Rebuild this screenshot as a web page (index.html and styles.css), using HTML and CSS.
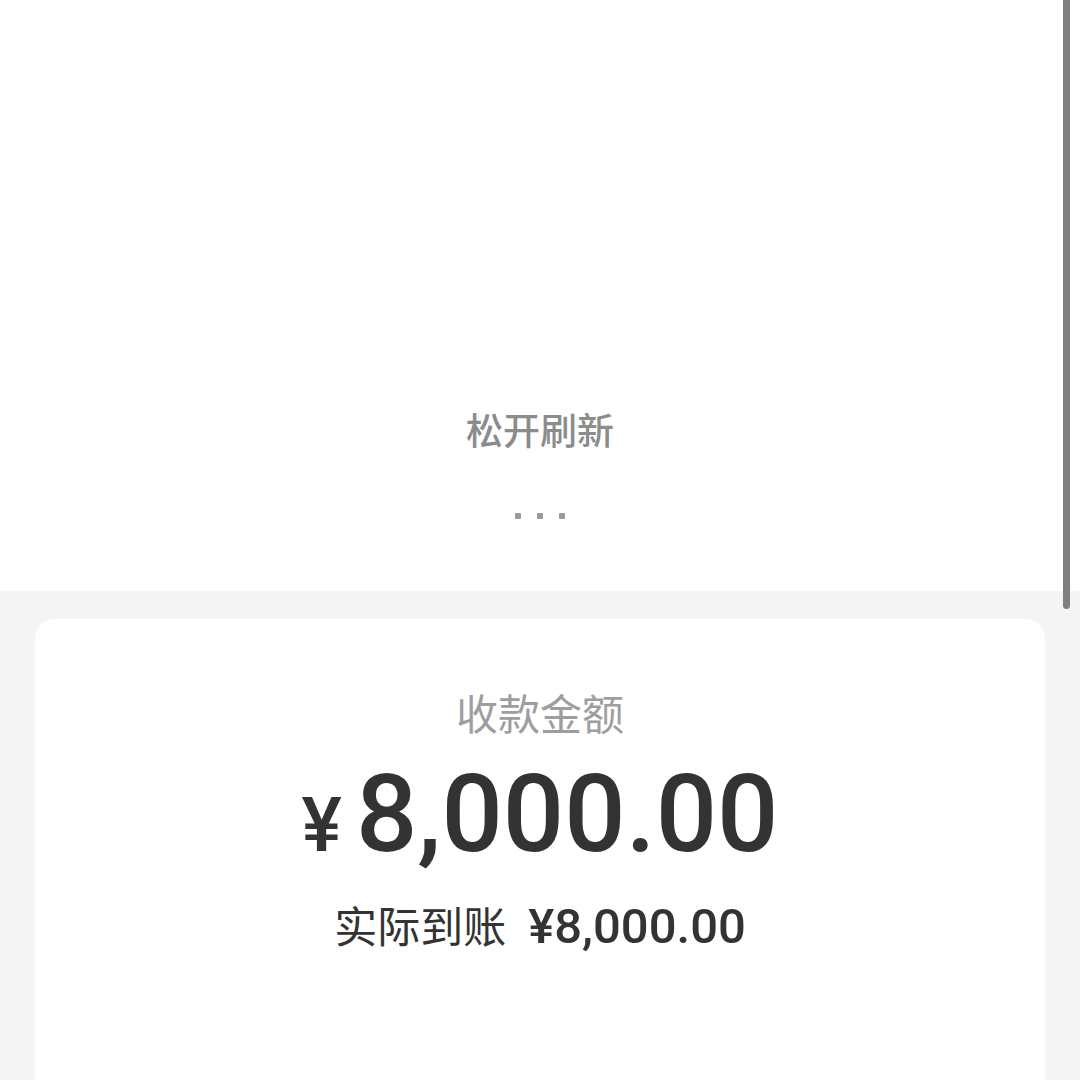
FILE: index.html
```html
<!DOCTYPE html>
<html>
<head>
    <title>收款金额</title>
    <link rel="stylesheet" href="styles.css">
</head>
<body>
    <div class="pull-area">
        <p class="pull-text">松开刷新</p>
        <div class="dots">
            <span></span><span></span><span></span>
        </div>
    </div>
    <div class="content">
        <div class="card">
            <p class="label">收款金额</p>
            <p class="amount"><span class="yen">¥</span>8,000.00</p>
            <p class="received">实际到账<span class="received-value">¥8,000.00</span></p>
        </div>
    </div>
    <div class="scrollbar"></div>
</body>
</html>
```

FILE: styles.css
```css
body {
    margin: 0;
    background-color: #f4f4f4;
    font-family: Roboto, "Noto Sans CJK SC", sans-serif;
    overflow: hidden;
}

p {
    margin: 0;
}

.pull-area {
    height: 591px;
    background-color: #ffffff;
    display: flex;
    flex-direction: column;
    align-items: center;
    justify-content: flex-end;
    padding-bottom: 72px;
    box-sizing: border-box;
}

.pull-text {
    font-family: "Noto Sans CJK SC", sans-serif;
    font-size: 37px;
    line-height: 1;
    font-weight: 500;
    color: #8c8c8c;
}

.dots {
    display: flex;
    gap: 16px;
    margin-top: 65px;
}

.dots span {
    width: 6px;
    height: 6px;
    border-radius: 1px;
    background-color: #9a9a9a;
}

.content {
    padding: 28px 35px 0;
}

.card {
    background-color: #ffffff;
    border-radius: 20px 20px 0 0;
    height: 461px;
    display: flex;
    flex-direction: column;
    align-items: center;
    padding-top: 72px;
    box-sizing: border-box;
}

.label {
    font-family: "Noto Sans CJK SC", sans-serif;
    font-size: 42px;
    line-height: 1;
    color: #9e9e9e;
}

.amount {
    margin-top: 27px;
    font-size: 108px;
    line-height: 1;
    font-weight: 500;
    color: #333333;
}

.yen {
    font-size: 76px;
    margin-right: 14px;
}

.received {
    margin-top: 34px;
    font-family: "Noto Sans CJK SC", sans-serif;
    font-size: 43px;
    line-height: 1;
    color: #333333;
}

.received-value {
    font-family: Roboto, sans-serif;
    font-size: 49px;
    font-weight: 500;
    margin-left: 22px;
}

.scrollbar {
    position: absolute;
    top: 0;
    left: 1063px;
    width: 7px;
    height: 609px;
    border-radius: 0 0 4px 4px;
    background-color: #7f7f7f;
}
```
